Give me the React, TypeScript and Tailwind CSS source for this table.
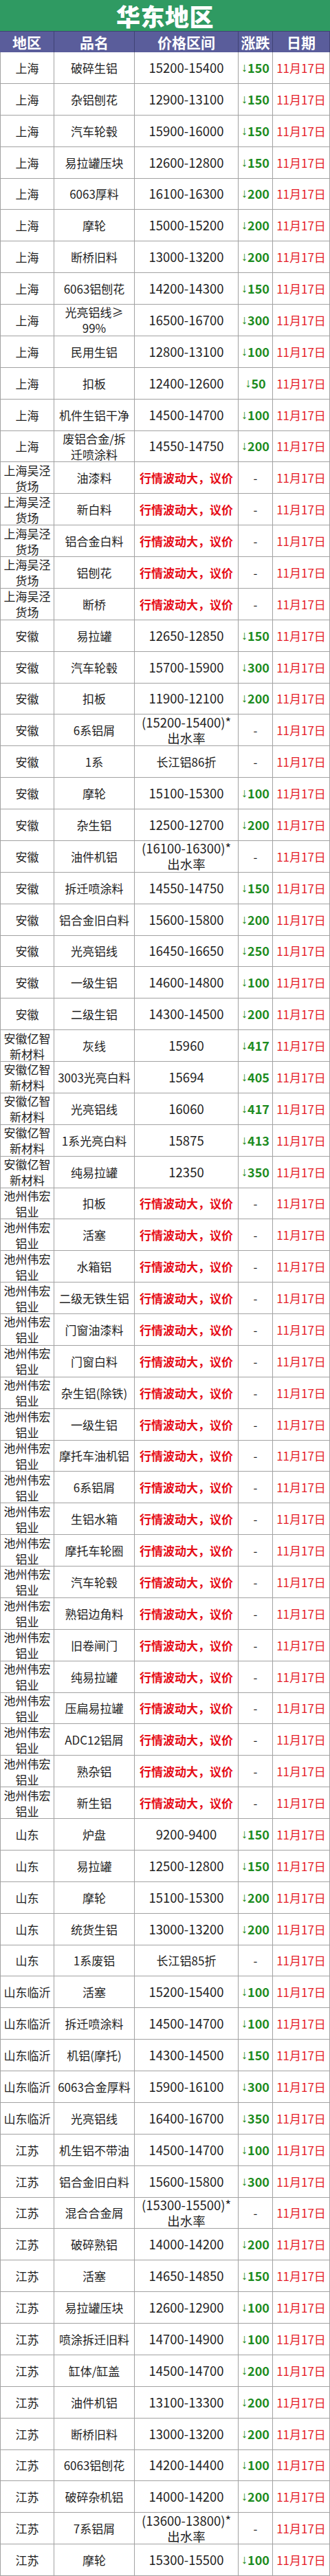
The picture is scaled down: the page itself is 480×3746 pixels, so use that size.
import React from "react";

type Row = [string, string, string, string];

const DATE = "11月17日";
const YJ = "议价";
const WJ = "上海吴泾\n货场";
const YZ = "安徽亿智\n新材料";
const CZ = "池州伟宏\n铝业";
const LY = "山东临沂";

const rows: Row[] = [
  ["上海", "破碎生铝", "15200-15400", "150"],
  ["上海", "杂铝刨花", "12900-13100", "150"],
  ["上海", "汽车轮毂", "15900-16000", "150"],
  ["上海", "易拉罐压块", "12600-12800", "150"],
  ["上海", "6063厚料", "16100-16300", "200"],
  ["上海", "摩轮", "15000-15200", "200"],
  ["上海", "断桥旧料", "13000-13200", "200"],
  ["上海", "6063铝刨花", "14200-14300", "150"],
  ["上海", "光亮铝线≥\n99%", "16500-16700", "300"],
  ["上海", "民用生铝", "12800-13100", "100"],
  ["上海", "扣板", "12400-12600", "50"],
  ["上海", "机件生铝干净", "14500-14700", "100"],
  ["上海", "废铝合金/拆\n迁喷涂料", "14550-14750", "200"],
  [WJ, "油漆料", YJ, "-"],
  [WJ, "新白料", YJ, "-"],
  [WJ, "铝合金白料", YJ, "-"],
  [WJ, "铝刨花", YJ, "-"],
  [WJ, "断桥", YJ, "-"],
  ["安徽", "易拉罐", "12650-12850", "150"],
  ["安徽", "汽车轮毂", "15700-15900", "300"],
  ["安徽", "扣板", "11900-12100", "200"],
  ["安徽", "6系铝屑", "(15200-15400)*\n出水率", "-"],
  ["安徽", "1系", "长江铝86折", "-"],
  ["安徽", "摩轮", "15100-15300", "100"],
  ["安徽", "杂生铝", "12500-12700", "200"],
  ["安徽", "油件机铝", "(16100-16300)*\n出水率", "-"],
  ["安徽", "拆迁喷涂料", "14550-14750", "150"],
  ["安徽", "铝合金旧白料", "15600-15800", "200"],
  ["安徽", "光亮铝线", "16450-16650", "250"],
  ["安徽", "一级生铝", "14600-14800", "100"],
  ["安徽", "二级生铝", "14300-14500", "200"],
  [YZ, "灰线", "15960", "417"],
  [YZ, "3003光亮白料", "15694", "405"],
  [YZ, "光亮铝线", "16060", "417"],
  [YZ, "1系光亮白料", "15875", "413"],
  [YZ, "纯易拉罐", "12350", "350"],
  [CZ, "扣板", YJ, "-"],
  [CZ, "活塞", YJ, "-"],
  [CZ, "水箱铝", YJ, "-"],
  [CZ, "二级无铁生铝", YJ, "-"],
  [CZ, "门窗油漆料", YJ, "-"],
  [CZ, "门窗白料", YJ, "-"],
  [CZ, "杂生铝(除铁)", YJ, "-"],
  [CZ, "一级生铝", YJ, "-"],
  [CZ, "摩托车油机铝", YJ, "-"],
  [CZ, "6系铝屑", YJ, "-"],
  [CZ, "生铝水箱", YJ, "-"],
  [CZ, "摩托车轮圈", YJ, "-"],
  [CZ, "汽车轮毂", YJ, "-"],
  [CZ, "熟铝边角料", YJ, "-"],
  [CZ, "旧卷闸门", YJ, "-"],
  [CZ, "纯易拉罐", YJ, "-"],
  [CZ, "压扁易拉罐", YJ, "-"],
  [CZ, "ADC12铝屑", YJ, "-"],
  [CZ, "熟杂铝", YJ, "-"],
  [CZ, "新生铝", YJ, "-"],
  ["山东", "炉盘", "9200-9400", "150"],
  ["山东", "易拉罐", "12500-12800", "150"],
  ["山东", "摩轮", "15100-15300", "200"],
  ["山东", "统货生铝", "13000-13200", "200"],
  ["山东", "1系废铝", "长江铝85折", "-"],
  [LY, "活塞", "15200-15400", "100"],
  [LY, "拆迁喷涂料", "14500-14700", "100"],
  [LY, "机铝(摩托)", "14300-14500", "150"],
  [LY, "6063合金厚料", "15900-16100", "300"],
  [LY, "光亮铝线", "16400-16700", "350"],
  ["江苏", "机生铝不带油", "14500-14700", "100"],
  ["江苏", "铝合金旧白料", "15600-15800", "300"],
  ["江苏", "混合合金屑", "(15300-15500)*\n出水率", "-"],
  ["江苏", "破碎熟铝", "14000-14200", "200"],
  ["江苏", "活塞", "14650-14850", "150"],
  ["江苏", "易拉罐压块", "12600-12900", "100"],
  ["江苏", "喷涂拆迁旧料", "14700-14900", "100"],
  ["江苏", "缸体/缸盖", "14500-14700", "200"],
  ["江苏", "油件机铝", "13100-13300", "200"],
  ["江苏", "断桥旧料", "13000-13200", "200"],
  ["江苏", "6063铝刨花", "14200-14400", "100"],
  ["江苏", "破碎杂机铝", "14000-14200", "200"],
  ["江苏", "7系铝屑", "(13600-13800)*\n出水率", "-"],
  ["江苏", "摩轮", "15300-15500", "100"],
];

const cell =
  "flex items-center justify-center text-center whitespace-pre-line border-r border-b border-[#a2a2a2] leading-[23px]";

export default function App() {
  return (
    <div className="w-[480px] bg-white font-['Noto_Sans_CJK_SC',sans-serif] text-[#1f1f1f]">
      <div className="h-[45px] bg-[#2f9a62] flex items-center justify-center text-white text-[35px] font-black leading-none tracking-[0.5px]">
        华东地区
      </div>
      <div className="grid grid-cols-[79px_117px_151px_50px_83px] h-[31px] bg-[#5a5d9b] text-white text-[21px] font-bold leading-none">
        {["地区", "品名", "价格区间", "涨跌", "日期"].map((h) => (
          <div key={h} className="flex items-center justify-center border-r border-t border-[#3f4274] whitespace-nowrap">
            {h}
          </div>
        ))}
      </div>
      <div className="grid grid-cols-[79px_117px_151px_50px_83px] auto-rows-[45.875px] text-[17px]">
        {rows.map(([region, name, price, change], i) => (
          <React.Fragment key={i}>
            <div className={`${cell} border-l`}>{region}</div>
            <div className={cell}>{name}</div>
            {price === YJ ? (
              <div className={`${cell} text-[#e60d17] font-bold`}>行情波动大，议价</div>
            ) : (
              <div className={`${cell} ${price.includes("长江") ? "" : "text-[18.5px]"}`}>{price}</div>
            )}
            {change === "-" ? (
              <div className={cell}>-</div>
            ) : (
              <div className={`${cell} text-[#1d8c21] font-bold text-[18px] whitespace-nowrap`}>
                <span className="font-['Liberation_Sans',sans-serif] font-normal">↓</span>
                {change}
              </div>
            )}
            <div className={`${cell} text-[#e51c28]`}>{DATE}</div>
          </React.Fragment>
        ))}
      </div>
    </div>
  );
}
